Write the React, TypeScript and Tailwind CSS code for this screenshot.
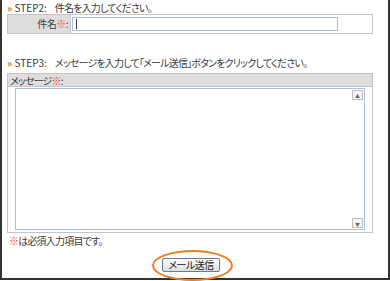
export default function App() {
  const font = "font-['MS_UI_Gothic','Noto_Sans_CJK_JP',sans-serif] [font-feature-settings:'palt']";
  return (
    <div className={`h-[281px] w-[390px] bg-white ${font} text-[10px] leading-[12px] text-[#3a3a3a]`}>
      <div className="flex h-[280px] w-[390px] flex-col border-x-2 border-b-2 border-[#333] pl-[5px] pr-[15px]">
        {/* STEP2 */}
        <p className="mt-[3px] h-[10px] whitespace-nowrap leading-[10px]">
          <span className="font-bold text-[#f26a10]">»</span> STEP2:
          <span className="ml-[8px] tracking-[-0.8px]">件名を入力してください。</span>
        </p>
        <div className="mt-[1px] flex h-[20px] border border-[#c4c4c4]">
          <div className="flex w-[63px] items-center justify-end border-r border-[#c4c4c4] bg-[#dedede] pr-[2px] tracking-[-0.5px]">
            件名<span className="text-[#ff3b3b]">※</span>:
          </div>
          <div className="flex flex-1 items-center pl-[1px]">
            <div className="flex h-[14px] w-[266px] items-center border border-[#a9bfd6] pl-[3px]">
              <span className="h-[10px] w-px bg-[#333]" />
            </div>
          </div>
        </div>

        {/* STEP3 */}
        <p className="mt-[24px] h-[10px] whitespace-nowrap leading-[10px]">
          <span className="font-bold text-[#f26a10]">»</span> STEP3:
          <span className="ml-[8px] tracking-[-0.8px]">メッセージを入力して「メール送信」ボタンをクリックしてください。</span>
        </p>
        <div className="mt-[5px] flex h-[160px] flex-col border border-[#c4c4c4]">
          <div className="h-[13px] border-b border-[#c4c4c4] bg-[#dedede] pl-[2px] leading-[13px] tracking-[-0.8px]">
            メッセージ<span className="text-[#ff3b3b]">※</span>:
          </div>
          <div className="flex flex-1 px-[7px] pb-[2px] pt-[1px]">
            <div className="flex flex-1 justify-end border border-[#a9bfd6] p-[1px]">
              <div className="flex w-[11px] flex-col justify-between">
                <div className="flex h-[10px] items-center justify-center border border-[#bdbdbd] bg-[#f4f4f4] text-[5px] leading-none text-[#666]">
                  ▲
                </div>
                <div className="flex h-[10px] items-center justify-center border border-[#bdbdbd] bg-[#f4f4f4] text-[5px] leading-none text-[#666]">
                  ▼
                </div>
              </div>
            </div>
          </div>
        </div>

        <p className="mt-[2px] pl-[2px] leading-[11px] tracking-[-0.8px]">
          <span className="text-[#ff3b3b]">※</span>は必須入力項目です。
        </p>

        {/* submit */}
        <div className="relative mt-[12px] flex justify-center pl-[2px]">
          <button className="h-[14px] w-[58px] rounded-[2px] border border-[#5d7ca3] bg-gradient-to-b from-[#ffffff] to-[#dcdcdc] text-[10px] leading-[12px] tracking-[-0.5px] text-[#222]">
            メール送信
          </button>
          <div className="pointer-events-none absolute left-[145px] top-[-8px] h-[31px] w-[81px] rounded-[50%] border-[2.5px] border-[#f47a1f]" />
        </div>
      </div>
    </div>
  );
}
